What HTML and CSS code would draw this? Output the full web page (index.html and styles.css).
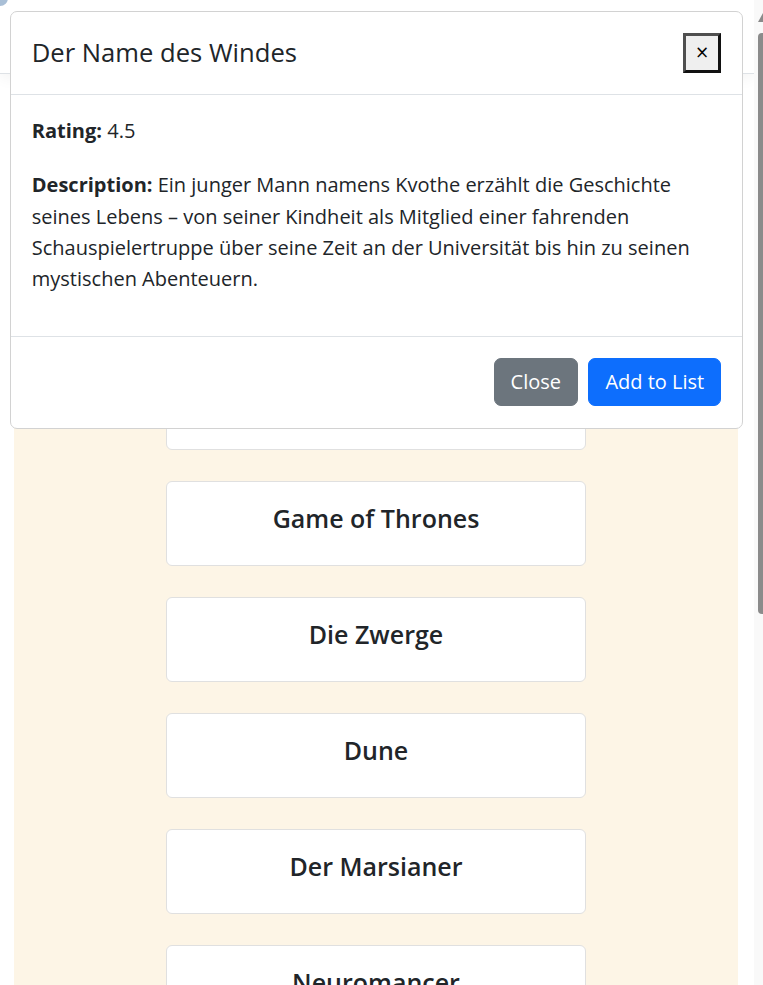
FILE: index.html
```html
<!DOCTYPE html>
<html lang="de">
<head>
<meta charset="utf-8">
<title>Bücherliste</title>
<link rel="stylesheet" href="styles.css">
</head>
<body>
  <div class="page">
    <nav class="navbar"><span class="nav-mark"></span></nav>
    <main class="shelf">
      <div class="book-card"><h5 class="book-title">Der Herr der Ringe</h5></div>
      <div class="book-card"><h5 class="book-title">Harry Potter</h5></div>
      <div class="book-card"><h5 class="book-title">Der Name des Windes</h5></div>
      <div class="book-card"><h5 class="book-title">Game of Thrones</h5></div>
      <div class="book-card"><h5 class="book-title">Die Zwerge</h5></div>
      <div class="book-card"><h5 class="book-title">Dune</h5></div>
      <div class="book-card"><h5 class="book-title">Der Marsianer</h5></div>
      <div class="book-card"><h5 class="book-title">Neuromancer</h5></div>
      <div class="book-card"><h5 class="book-title">Foundation</h5></div>
    </main>
  </div>

  <div class="modal">
    <div class="modal-header">
      <h5 class="modal-title">Der Name des Windes</h5>
      <button class="close-x" type="button">×</button>
    </div>
    <div class="modal-body">
      <p><strong>Rating:</strong> 4.5</p>
      <p><strong>Description:</strong> Ein junger Mann namens Kvothe erzählt die Geschichte seines Lebens – von seiner Kindheit als Mitglied einer fahrenden Schauspielertruppe über seine Zeit an der Universität bis hin zu seinen mystischen Abenteuern.</p>
    </div>
    <div class="modal-footer">
      <button class="btn btn-secondary" type="button">Close</button>
      <button class="btn btn-primary" type="button">Add to List</button>
    </div>
  </div>

  <div class="scrollbar">
    <span class="scroll-arrow"></span>
    <span class="scroll-thumb"></span>
  </div>
</body>
</html>
```

FILE: styles.css
```css
html, body {
  margin: 0;
  padding: 0;
  overflow: hidden;
  height: 100%;
}

body {
  font-family: "Open Sans", "Noto Sans", sans-serif;
  font-size: 20px;
  line-height: 31.2px;
  color: #212529;
  background: #ffffff;
}

.page {
  width: 754px;
}

.navbar {
  position: relative;
  height: 73px;
  background: #ffffff;
  border-bottom: 1px solid #dee2e6;
  box-shadow: 0 4px 14px rgba(0, 0, 0, 0.05);
  overflow: hidden;
}

.nav-mark {
  position: absolute;
  left: -8px;
  top: -10px;
  width: 16px;
  height: 16px;
  border-radius: 50%;
  background: #a9bfd6;
}

.shelf {
  margin: 16px 0 0 14px;
  width: 724px;
  background: #fdf5e6;
  padding: 43px 0 40px;
  display: flex;
  flex-direction: column;
  align-items: center;
  gap: 30.8px;
}

.book-card {
  box-sizing: border-box;
  width: 420px;
  background: #ffffff;
  border: 1px solid #e0e0e0;
  border-radius: 6px;
  padding: 20.8px;
  text-align: center;
}

.book-title {
  margin: 0 0 10.4px;
  font-size: 25px;
  line-height: 31.2px;
  font-weight: 600;
}

.modal {
  position: fixed;
  left: 10px;
  top: 11px;
  width: 733px;
  box-sizing: border-box;
  background: #ffffff;
  border: 1px solid #d2d2d2;
  border-radius: 7px;
}

.modal-header {
  display: flex;
  align-items: center;
  justify-content: space-between;
  padding: 20.8px 20.8px;
  border-bottom: 1px solid #dee2e6;
}

.modal-title {
  margin: 0;
  font-size: 25.6px;
  line-height: 39px;
  font-weight: 500;
}

.close-x {
  box-sizing: border-box;
  width: 38px;
  height: 40px;
  padding: 0;
  background: #efefef;
  border-style: solid;
  border-width: 3px;
  border-color: #4f4f4f #111111 #111111 #4f4f4f;
  font-family: "DejaVu Sans", sans-serif;
  font-size: 17px;
  line-height: 1;
  color: #000000;
}

.modal-body {
  padding: 20.8px 20.8px 18.8px;
}

.modal-body p {
  margin: 0 0 22.8px;
}

.modal-body strong {
  font-weight: 700;
}

.modal-footer {
  display: flex;
  justify-content: flex-end;
  gap: 10.4px;
  padding: 20.8px 20.8px 21.4px;
  border-top: 1px solid #dee2e6;
}

.btn {
  font-family: inherit;
  font-size: 20px;
  line-height: 31.2px;
  padding: 7.8px 16px;
  border: 1px solid transparent;
  border-radius: 7px;
  color: #ffffff;
}

.btn-secondary {
  background: #6c757d;
  border-color: #6c757d;
}

.btn-primary {
  background: #0d6efd;
  border-color: #0d6efd;
}

.scrollbar {
  position: fixed;
  top: 0;
  right: 0;
  width: 9px;
  height: 100%;
  background: #f9f9f9;
}

.scroll-arrow {
  position: absolute;
  left: 4px;
  top: 13px;
  width: 0;
  height: 0;
  border-left: 5px solid transparent;
  border-right: 5px solid transparent;
  border-bottom: 9px solid #8a8a8a;
}

.scroll-thumb {
  position: absolute;
  left: 4px;
  top: 33px;
  width: 6px;
  height: 581px;
  border-radius: 4px 0 0 4px;
  background: #8b8b8b;
}
```
